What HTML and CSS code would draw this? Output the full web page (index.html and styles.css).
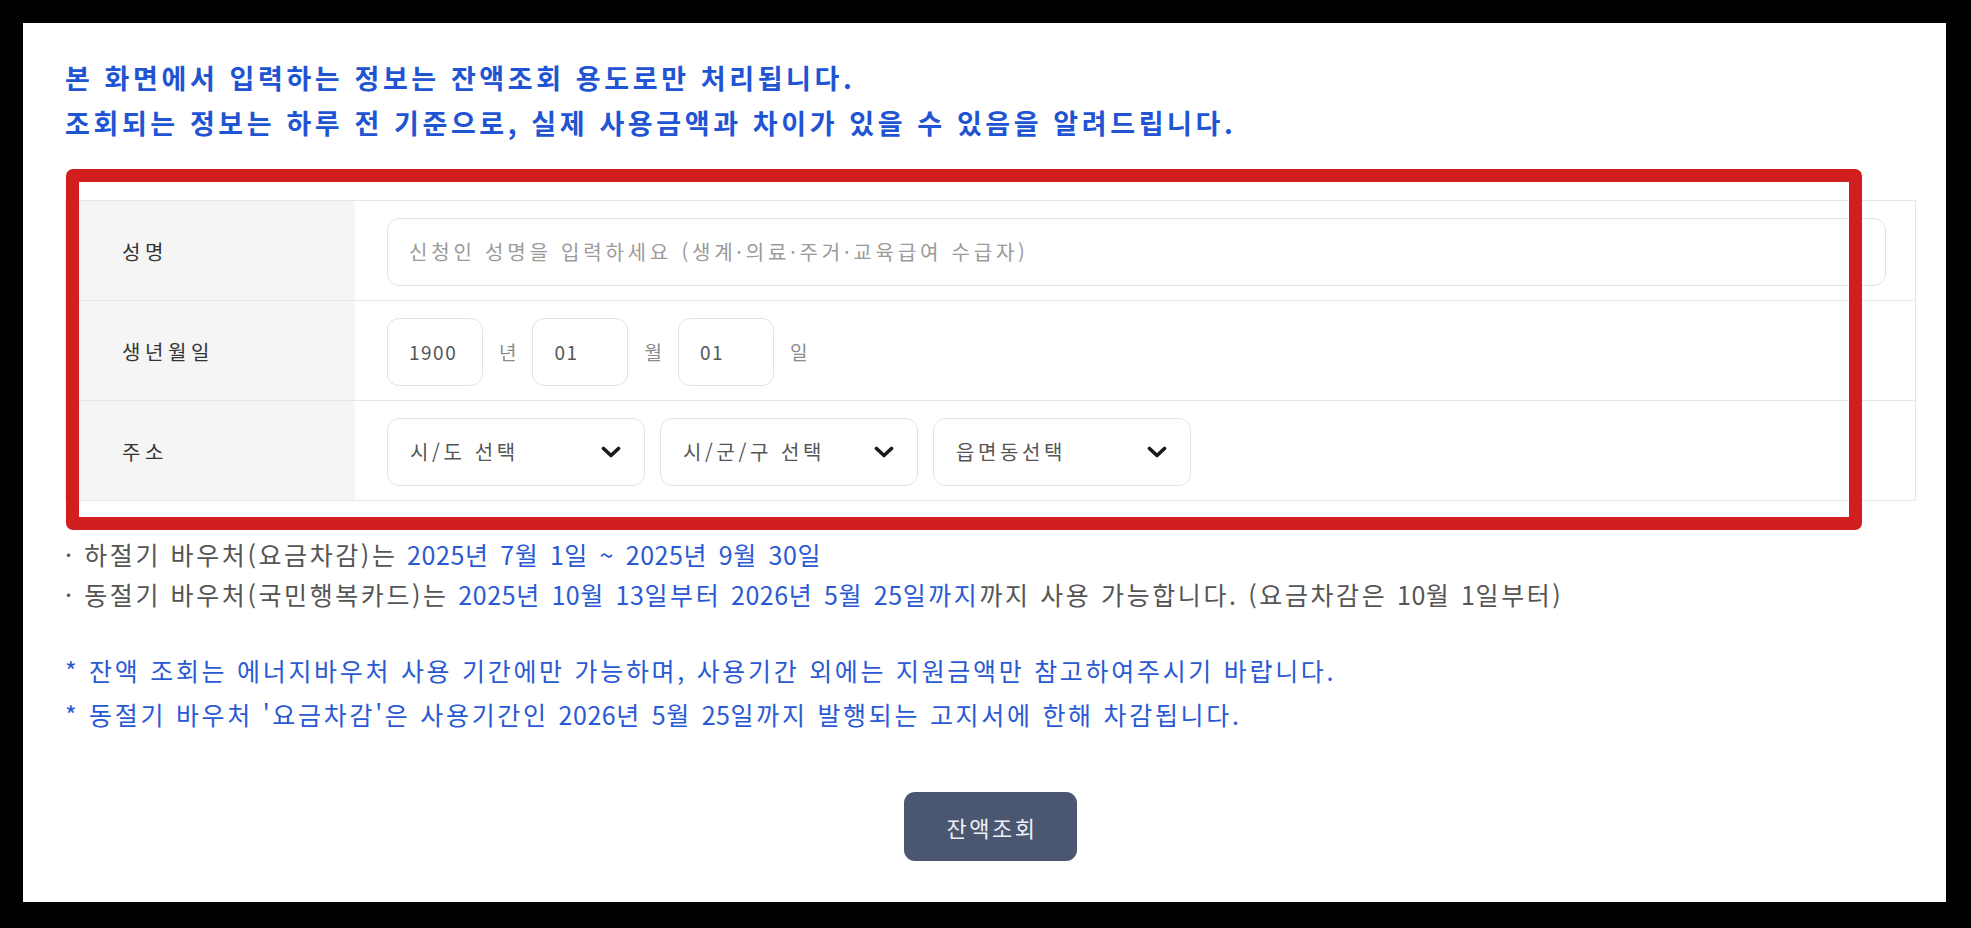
FILE: index.html
```html
<!DOCTYPE html>
<html lang="ko">
<head>
<meta charset="utf-8">
<title>잔액조회</title>
<link rel="stylesheet" href="styles.css">
</head>
<body>
<div class="page">
  <div class="notice">
    <p>본 화면에서 입력하는 정보는 잔액조회 용도로만 처리됩니다.</p>
    <p>조회되는 정보는 하루 전 기준으로, 실제 사용금액과 차이가 있을 수 있음을 알려드립니다.</p>
  </div>

  <div class="form-table">
    <div class="row">
      <div class="label">성명</div>
      <div class="field">
        <div class="input full"><span class="placeholder">신청인 성명을 입력하세요 (생계·의료·주거·교육급여 수급자)</span></div>
      </div>
    </div>
    <div class="row">
      <div class="label">생년월일</div>
      <div class="field">
        <div class="input date">1900</div>
        <span class="unit">년</span>
        <div class="input date">01</div>
        <span class="unit">월</span>
        <div class="input date">01</div>
        <span class="unit">일</span>
      </div>
    </div>
    <div class="row">
      <div class="label">주소</div>
      <div class="field selects">
        <div class="select"><span>시/도 선택</span><svg class="chev" viewBox="0 0 20 12" width="20" height="12"><path d="M2.5 2.5 L10 9.5 L17.5 2.5" fill="none" stroke="#1a1a1a" stroke-width="3.6" stroke-linecap="round" stroke-linejoin="round"/></svg></div>
        <div class="select"><span>시/군/구 선택</span><svg class="chev" viewBox="0 0 20 12" width="20" height="12"><path d="M2.5 2.5 L10 9.5 L17.5 2.5" fill="none" stroke="#1a1a1a" stroke-width="3.6" stroke-linecap="round" stroke-linejoin="round"/></svg></div>
        <div class="select"><span>읍면동선택</span><svg class="chev" viewBox="0 0 20 12" width="20" height="12"><path d="M2.5 2.5 L10 9.5 L17.5 2.5" fill="none" stroke="#1a1a1a" stroke-width="3.6" stroke-linecap="round" stroke-linejoin="round"/></svg></div>
      </div>
    </div>
  </div>

  <div class="periods">
    <p>· 하절기 바우처(요금차감)는 <span class="blue"><span class="num">2025</span>년 <span class="num">7</span>월 <span class="num">1</span>일 ~ <span class="num">2025</span>년 <span class="num">9</span>월 <span class="num">30</span>일</span></p>
    <p>· 동절기 바우처(국민행복카드)는 <span class="blue"><span class="num">2025</span>년 <span class="num">10</span>월 <span class="num">13</span>일부터 <span class="num">2026</span>년 <span class="num">5</span>월 <span class="num">25</span>일까지</span>까지 사용 가능합니다. (요금차감은 <span class="num">10</span>월 <span class="num">1</span>일부터)</p>
  </div>

  <div class="remarks">
    <p>* 잔액 조회는 에너지바우처 사용 기간에만 가능하며, 사용기간 외에는 지원금액만 참고하여주시기 바랍니다.</p>
    <p>* 동절기 바우처 '요금차감'은 사용기간인 <span class="num">2026</span>년 <span class="num">5</span>월 <span class="num">25</span>일까지 발행되는 고지서에 한해 차감됩니다.</p>
  </div>

  <div class="actions">
    <button class="btn" type="button">잔액조회</button>
  </div>

  <div class="highlight"></div>
</div>
</body>
</html>
```

FILE: styles.css
```css
html, body {
  margin: 0;
  padding: 0;
  background: #000;
}

body {
  font-family: "Noto Sans CJK KR", "Noto Sans", sans-serif;
}

p {
  margin: 0;
}

.page {
  position: relative;
  box-sizing: border-box;
  margin: 23px 25px 0 23px;
  height: 879px;
  background: #fff;
  padding: 32px 30px 0 42px;
}

.notice {
  color: #2154d2;
  font-size: 27px;
  font-weight: 700;
  line-height: 45px;
  letter-spacing: 3.6px;
}

.form-table {
  margin-top: 55px;
  border: 1px solid #e6e6e6;
  border-bottom: none;
}

.row {
  display: flex;
  height: 99px;
  border-bottom: 1px solid #e6e6e6;
}

.label {
  width: 289px;
  flex: none;
  box-sizing: border-box;
  padding-left: 56px;
  padding-top: 2px;
  background: #f5f5f5;
  display: flex;
  align-items: center;
  color: #333;
  font-size: 20px;
  letter-spacing: 4.6px;
}

.field {
  flex: 1;
  display: flex;
  align-items: center;
  padding: 2px 29px 0 32px;
  gap: 16px;
}

.input {
  box-sizing: border-box;
  height: 68px;
  border: 1px solid #e3e3e3;
  border-radius: 12px;
  display: flex;
  align-items: center;
  padding-left: 21px;
  font-size: 19px;
  color: #555;
  letter-spacing: 1.5px;
}

.input.full {
  flex: 1;
}

.placeholder {
  color: #9a9a9a;
  font-size: 20px;
  letter-spacing: 3.8px;
}

.input.date {
  width: 96px;
}

.unit {
  color: #8a8a8a;
  font-size: 19px;
}

.selects {
  gap: 15px;
}

.select {
  box-sizing: border-box;
  width: 258px;
  height: 68px;
  border: 1px solid #e3e3e3;
  border-radius: 12px;
  display: flex;
  align-items: center;
  justify-content: space-between;
  padding: 0 23px 0 22px;
  font-size: 20px;
  color: #555;
  letter-spacing: 3.6px;
}

.chev {
  display: block;
  flex: none;
}

.periods {
  margin-top: 33px;
  font-size: 25px;
  line-height: 40px;
  color: #555;
  letter-spacing: 2.6px;
}

.num {
  letter-spacing: 0.6px;
}

.blue {
  color: #2a5ad3;
}

.remarks {
  margin-top: 34px;
  font-size: 25px;
  line-height: 44px;
  color: #2a5ad3;
  letter-spacing: 2.7px;
}

.actions {
  display: flex;
  justify-content: center;
  margin-top: 56px;
}

.btn {
  width: 173px;
  height: 69px;
  border: none;
  border-radius: 11px;
  background: #4b5670;
  color: #eef0f5;
  font-family: inherit;
  font-size: 22px;
  letter-spacing: 2.5px;
  padding: 0 0 0 3px;
}

.highlight {
  position: absolute;
  left: 43px;
  top: 146px;
  width: 1796px;
  height: 361px;
  box-sizing: border-box;
  border: 13px solid #d11f1f;
  border-radius: 7px;
  pointer-events: none;
}
```
